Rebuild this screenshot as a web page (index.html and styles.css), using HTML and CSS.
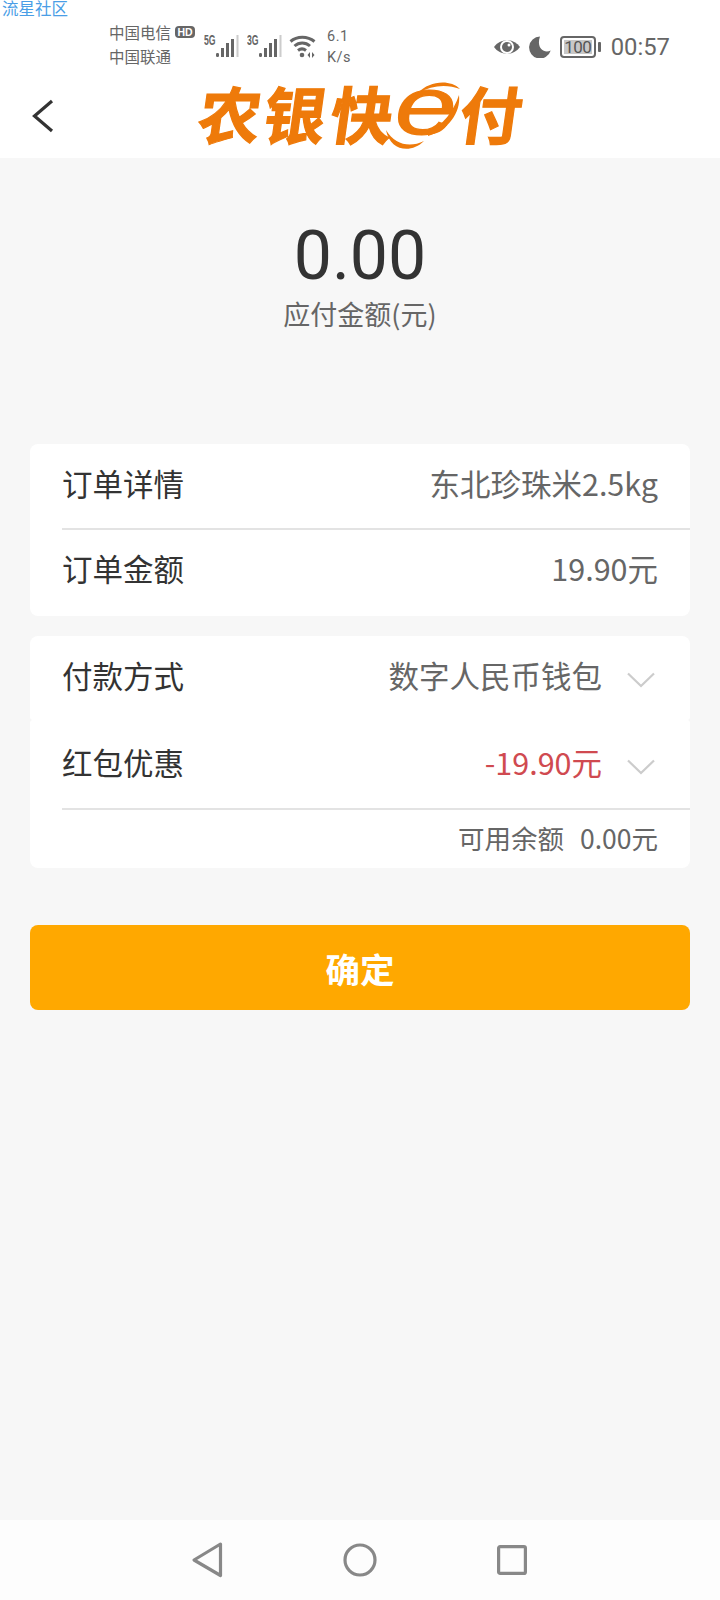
FILE: index.html
```html
<!DOCTYPE html>
<html lang="zh-CN">
<head>
<meta charset="utf-8">
<title>农银快e付</title>
<link rel="stylesheet" href="styles.css">
</head>
<body>
<div class="screen">
  <div class="watermark">流星社区</div>
  <div class="status">
    <div class="carriers">
      <div class="carrier-line">中国电信<span class="hd">HD</span></div>
      <div class="carrier-line">中国联通</div>
    </div>
    <div class="signal">
      <span class="net">5G</span>
      <svg class="bars" width="23" height="23" viewBox="0 0 23 23"><rect x="0" y="18" width="3" height="4" rx="1.2" fill="#666"/><rect x="5" y="13" width="3" height="9" fill="#666"/><rect x="10" y="8" width="3" height="14" fill="#666"/><rect x="15" y="4" width="3" height="18" fill="#666"/><rect x="20.500" y="0" width="2" height="22" fill="#ccc"/></svg>
    </div>
    <div class="signal">
      <span class="net">3G</span>
      <svg class="bars" width="23" height="23" viewBox="0 0 23 23"><rect x="0" y="18" width="3" height="4" rx="1.2" fill="#666"/><rect x="5" y="13" width="3" height="9" fill="#666"/><rect x="10" y="8" width="3" height="14" fill="#666"/><rect x="15" y="4" width="3" height="18" fill="#666"/><rect x="20.500" y="0" width="2" height="22" fill="#ccc"/></svg>
    </div>
    <svg class="wifi" width="27" height="23" viewBox="0 0 27 23" fill="none" stroke="#666" stroke-width="3"><path d="M1.500 6.500 C8 0.800 18.500 0.800 25.500 6.500"/><path d="M5.500 11 C10 7 16.500 7 21 11"/><path d="M9 15.500 C11.500 13.500 14.500 13.500 17 15.500"/><circle cx="13" cy="20" r="2.300" fill="#666" stroke="none"/><path d="M21 17 L18.500 20 L21 23 Z M23 17 L25.500 20 L23 23 Z" fill="#666" stroke="none"/></svg>
    <div class="speed"><div>6.1</div><div>K/s</div></div>
    <div class="status-right">
      <svg width="28" height="20" viewBox="0 0 28 20"><path d="M1 10 C7 1 21 1 27 10 C21 19 7 19 1 10 Z" fill="#666"/><circle cx="14" cy="10" r="7" fill="#fff"/><circle cx="14" cy="10" r="5" fill="#666"/><circle cx="16" cy="8" r="1.500" fill="#fff"/></svg>
      <svg width="22" height="22" viewBox="0 0 22 22"><path d="M11 0.500 A11 11 0 1 0 21.700 14.500 C15 18 7 12 11 0.500 Z" fill="#666"/></svg>
      <div class="battery">
        <div class="battery-body"><span class="battery-level">100</span></div>
        <span class="battery-tip"></span>
      </div>
      <span class="time">00:57</span>
    </div>
  </div>
  <header class="topbar">
    <svg class="back" width="24" height="34" viewBox="0 0 24 34" fill="none" stroke="#333" stroke-width="3.200"><path d="M21 2 L3.500 17 L21 32"/></svg>
    <svg class="logo" width="326" height="72" viewBox="0 0 326 72">
      <g class="logo-cjk" fill="#ee7a0a" stroke="#ee7a0a" stroke-width="1.200" transform="skewX(-8)">
        <text x="8" y="59">农</text>
        <text x="73" y="59">银</text>
        <text x="140" y="59">快</text>
        <text x="269" y="59">付</text>
      </g>
      <text class="logo-e" transform="translate(199 54) scale(1.35 1)" fill="#ee7a0a" stroke="#ee7a0a" stroke-width="1.200">e</text>
      <g fill="#ee7a0a">
        <path d="M222 13 C233 1 254 -1 264 9 C251 4 236 5 222 13 Z"/>
        <path d="M190 50 C194 71 215 74 228 61 C214 68 199 65 190 50 Z"/>
        <path d="M232 52 C247 46 258 30 263 15 C265 33 252 50 232 56 Z"/>
      </g>
    </svg>
  </header>
  <main class="content">
    <section class="amount">
      <div class="amount-value">0.00</div>
      <div class="amount-label">应付金额(元)</div>
    </section>
    <section class="card card-order">
      <div class="row row-first">
        <span class="row-label">订单详情</span>
        <span class="row-value">东北珍珠米2.5kg</span>
      </div>
      <div class="row row-second">
        <span class="row-label">订单金额</span>
        <span class="row-value">19.90元</span>
      </div>
    </section>
    <section class="card-stack">
      <div class="card card-upper">
        <div class="row row-pick">
          <span class="row-label">付款方式</span>
          <span class="row-value">数字人民币钱包</span>
          <svg class="chev" width="28" height="16" viewBox="0 0 28 16" fill="none" stroke="#ccc" stroke-width="2.200"><path d="M1 1.500 L14 14 L27 1.500"/></svg>
        </div>
      </div>
      <div class="card card-lower">
        <div class="row row-pick row-seam">
          <span class="row-label">红包优惠</span>
          <span class="row-value row-red">-19.90元</span>
          <svg class="chev" width="28" height="16" viewBox="0 0 28 16" fill="none" stroke="#ccc" stroke-width="2.200"><path d="M1 1.500 L14 14 L27 1.500"/></svg>
        </div>
        <div class="balance">可用余额<span class="balance-num">0.00元</span></div>
      </div>
    </section>
    <button class="confirm">确定</button>
  </main>
  <nav class="navbar">
    <svg class="nav-back" width="32" height="36" viewBox="0 0 32 36" fill="none" stroke="#888" stroke-width="3.200" stroke-linejoin="round"><path d="M29.500 2 L3 18 L29.500 33.500 Z"/></svg>
    <svg width="34" height="34" viewBox="0 0 34 34" fill="none" stroke="#888" stroke-width="3.200"><circle cx="17" cy="17" r="15"/></svg>
    <svg width="30" height="30" viewBox="0 0 30 30" fill="none" stroke="#888" stroke-width="3.200" stroke-linejoin="round"><rect x="1.600" y="1.600" width="26.800" height="26.800" rx="1.500"/></svg>
  </nav>
</div>
</body>
</html>
```

FILE: styles.css
```css
* { box-sizing: border-box; }
html, body { margin: 0; padding: 0; }
body {
  width: 720px;
  height: 1600px;
  background: #f7f7f7;
  font-family: "Noto Sans CJK SC", "Noto Sans", sans-serif;
  overflow: hidden;
}
.screen {
  position: relative;
  width: 720px;
  height: 1600px;
  display: flex;
  flex-direction: column;
}
.watermark {
  position: absolute;
  left: 2px;
  top: 0;
  font-size: 16.500px;
  line-height: 16px;
  color: #4a9ee6;
}
.status {
  height: 78px;
  background: #fff;
  display: flex;
  align-items: center;
  padding: 16px 50px 0 109px;
  color: #666;
}
.carriers { width: 95px; font-size: 15.500px; margin-top: -6px; }
.carrier-line { display: flex; align-items: center; height: 24px; }
.hd {
  margin-left: 4px;
  width: 20px;
  height: 12px;
  background: #666;
  color: #fff;
  border-radius: 4px;
  font: 700 10.500px/12px "Liberation Sans", sans-serif;
  text-align: center;
}
.signal { display: flex; align-items: flex-end; width: 43px; height: 23px; margin-top: -1px; }
.net {
  font: 700 14px/11px "Liberation Sans", sans-serif;
  width: 12px;
  align-self: flex-start;
  white-space: nowrap;
  transform: scaleX(0.62);
  transform-origin: left top;
}
.wifi { margin-left: -1px; margin-top: -1px; }
.speed {
  margin-left: 11px;
  font: 400 14.500px/21px Roboto, sans-serif;
  letter-spacing: 0.500px;
}
.status-right { margin-left: auto; display: flex; align-items: center; gap: 8px; }
.battery { display: flex; align-items: center; gap: 2px; margin-left: 1px; }
.battery-body {
  width: 36px;
  height: 22px;
  border: 2px solid #666;
  border-radius: 4px;
  padding: 2px;
  display: flex;
}
.battery-level {
  flex: 1;
  background: #c8c8c8;
  font: 400 17px/14px Roboto, sans-serif;
  color: #555;
  text-align: center;
  letter-spacing: -0.500px;
}
.battery-tip { width: 3px; height: 10px; background: #666; border-radius: 1px; }
.time { font: 400 23.800px/28px Roboto, sans-serif; color: #666; margin-left: 2px; }
.topbar {
  height: 80px;
  background: #fff;
  display: flex;
  align-items: center;
  padding: 0 0 0 31px;
  flex: none;
}
.back { margin-top: -5px; }
.logo { margin-left: 141px; margin-top: -5px; overflow: visible; }
.logo-cjk { font: 700 62px "Noto Sans CJK SC", sans-serif; }
.logo-e { font: italic 400 82px "Liberation Sans", sans-serif; }
.content { flex: 1; padding: 0 30px; display: flex; flex-direction: column; }
.amount { text-align: center; height: 286px; padding-top: 59px; }
.amount-value { font: 400 68px/78px Roboto, sans-serif; color: #333; }
.amount-label { font-size: 27px; line-height: 36px; color: #666; margin-top: 1px; }
.card {
  background: #fff;
  border-radius: 8px;
  padding-left: 32px;
}
.card-order { margin-bottom: 20px; }
.card-upper { border-radius: 8px 8px 3px 3px; }
.card-lower { border-radius: 3px 3px 8px 8px; }
.row {
  display: flex;
  align-items: center;
  height: 86px;
  padding: 0 32px 6px 0;
  font-size: 30.500px;
}
.row-first { border-bottom: 2px solid #e3e3e3; }
.row-second { padding-bottom: 10px; }
.row-label { color: #333; margin-right: auto; }
.row-value { color: #666; }
.row-red { color: #d04a50; }
.row-pick { height: 84px; padding: 0 35px 6px 0; }
.row-seam { height: 90px; border-bottom: 2px solid #e3e3e3; padding-bottom: 4px; }
.chev { margin: 10px 0 0 25px; }
.balance {
  height: 58px;
  padding: 0 32px 4px 0;
  display: flex;
  justify-content: flex-end;
  align-items: center;
  font-size: 26.500px;
  color: #666;
}
.balance-num { margin-left: 16px; }
.confirm {
  margin-top: 57px;
  height: 85px;
  border: 0;
  border-radius: 8px;
  background: #ffa800;
  color: #fff;
  font: 700 34.500px "Noto Sans CJK SC", sans-serif;
}
.navbar {
  height: 80px;
  background: #fdfdfd;
  display: flex;
  align-items: center;
  justify-content: center;
  gap: 120px;
  flex: none;
}
.nav-back { margin-left: -2px; }
```
